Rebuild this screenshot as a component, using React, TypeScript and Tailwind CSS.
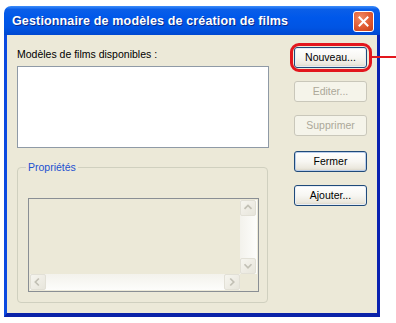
import React from "react";

const font = { fontFamily: '"Liberation Sans", Arial, sans-serif' };

function Btn({
  label,
  disabled,
  isDefault,
  className = "",
}: {
  label: string;
  disabled?: boolean;
  isDefault?: boolean;
  className?: string;
}) {
  return (
    <div
      className={
        "w-[73px] h-[21px] rounded-[3px] flex items-center justify-center text-[10.5px] leading-none border " +
        (disabled
          ? "border-[#c9c7ba] bg-[#f5f4ea] text-[#aca899] "
          : "border-[#1f4a7a] bg-[linear-gradient(to_bottom,#ffffff_0%,#f7f6f2_50%,#ebe8de_85%,#d8d2c4_100%)] text-black " +
            (isDefault ? "shadow-[inset_0_0_0_1px_#b9cdea] " : "shadow-[inset_0_0_0_1px_#e8eef6] ")) +
        className
      }
    >
      {label}
    </div>
  );
}

function Arrow({ dir }: { dir: "up" | "down" | "left" | "right" }) {
  const d =
    dir === "up"
      ? "M4 9 L8 5 L12 9"
      : dir === "down"
      ? "M4 6 L8 10 L12 6"
      : dir === "left"
      ? "M9 4 L5 8 L9 12"
      : "M6 4 L10 8 L6 12";
  return (
    <div className="w-[16px] h-[16px] rounded-[2px] border border-[#e2e0d6] bg-[linear-gradient(135deg,#f6f5ef,#e7e5db)] flex items-center justify-center">
      <svg width="14" height="14" viewBox="0 0 16 16">
        <path d={d} fill="none" stroke="#c2c0b5" strokeWidth="2" />
      </svg>
    </div>
  );
}

export default function App() {
  return (
    <div className="relative w-[396px] h-[323px] bg-white overflow-hidden" style={font}>
      <div className="ml-[4px] mt-[6px] w-[376px] h-[311px] flex flex-col rounded-t-[7px] overflow-hidden">
        {/* Title bar */}
        <div className="h-[29px] shrink-0 flex items-start pl-[8px] pr-[6px] bg-[linear-gradient(to_bottom,#3d8dfa_0%,#0a5ee8_12%,#0058ea_40%,#0054e3_75%,#0048d0_100%)]">
          <span className="mt-[9px] text-white font-bold text-[12.5px] leading-none tracking-[0.15px] [text-shadow:1px_1px_0_#0a2a8a]">
            Gestionnaire de modèles de création de films
          </span>
          <div className="ml-auto mt-[5px] w-[21px] h-[21px] rounded-[3px] border border-white bg-[radial-gradient(circle_at_35%_30%,#f08a65,#e05a31_55%,#c43c15)] flex items-center justify-center">
            <svg width="13" height="13" viewBox="0 0 13 13">
              <path d="M2.5 2.5 L10.5 10.5 M10.5 2.5 L2.5 10.5" stroke="white" strokeWidth="2" strokeLinecap="square" />
            </svg>
          </div>
        </div>
        {/* Body */}
        <div className="flex-1 flex bg-[#ece9d8] border-l-[3px] border-l-[#0b4ae0] border-r-[3px] border-r-[#0a22b0] border-b-[4px] border-b-[#0a22a8]">
          <div className="ml-[10px] w-[252px] flex flex-col">
            <div className="mt-[12px] h-[14px] leading-[14px] text-[10.5px] text-black">Modèles de films disponibles :</div>
            <div className="mt-[5px] h-[82px] w-[252px] border border-[#8f9aa6] bg-white" />
            <div className="relative mt-[19px] h-[136px] w-[251px] border border-[#d0d0bf] rounded-[4px] pt-[30px] pl-[10px]">
              <span className="absolute left-[8px] top-[-8px] px-[2px] bg-[#ece9d8] text-[10.5px] leading-[14px] text-[#1c50d0]">
                Propriétés
              </span>
              <div className="w-[231px] h-[94px] border border-[#8a8f94] p-[1px] grid grid-cols-[1fr_17px] grid-rows-[1fr_16px]">
                <div className="bg-[#ece9d8]" />
                <div className="flex flex-col bg-[linear-gradient(to_right,#f3f2ec,#fdfdfb)]">
                  <Arrow dir="up" />
                  <div className="flex-1" />
                  <Arrow dir="down" />
                </div>
                <div className="flex bg-[linear-gradient(to_bottom,#f3f2ec,#fdfdfb)]">
                  <Arrow dir="left" />
                  <div className="flex-1" />
                  <Arrow dir="right" />
                </div>
                <div className="bg-[#ece9d8]" />
              </div>
            </div>
          </div>
          <div className="ml-[25px] flex flex-col">
            <Btn label="Nouveau..." className="mt-[12px]" />
            <Btn label="Editer..." disabled className="mt-[13px]" />
            <Btn label="Supprimer" disabled className="mt-[13px]" />
            <Btn label="Fermer" isDefault className="mt-[15px]" />
            <Btn label="Ajouter..." className="mt-[13px]" />
          </div>
        </div>
      </div>
      {/* Red highlight */}
      <div className="absolute left-[290px] top-[43px] w-[82px] h-[29px] border-[3px] border-[#e3161d] rounded-[9px]" />
      <div className="absolute left-[372px] top-[56px] w-[24px] h-[2px] bg-[#e3161d]" />
    </div>
  );
}
